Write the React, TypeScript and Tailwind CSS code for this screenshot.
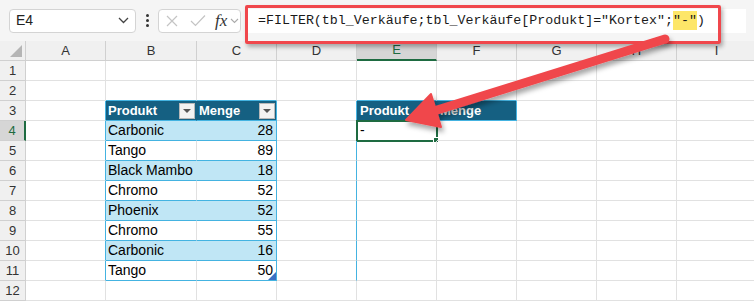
// Excel-like sheet: formula bar with a highlighted FILTER formula, a small
// blue table and a result range, with a red callout arrow on top.

import type { ReactElement } from 'react'

const COLS = ['A', 'B', 'C', 'D', 'E', 'F', 'G', 'H', 'I']
const COL_W = ['w-[80px]', 'w-[91px]', 'w-[80px]', 'w-[80px]', 'w-[80px]', 'w-[80px]', 'w-[80px]', 'w-[80px]', 'w-[80px]']

const DATA: [string, number][] = [
  ['Carbonic', 28],
  ['Tango', 89],
  ['Black Mambo', 18],
  ['Chromo', 52],
  ['Phoenix', 52],
  ['Chromo', 55],
  ['Carbonic', 16],
  ['Tango', 50],
]

const GRID = 'border-[#e1e1e1]'
const TBL_LINE = 'border-[#44b3e1]'

function FilterButton(): ReactElement {
  return (
    <span className="ml-auto mr-px flex h-[16px] w-[16px] items-center justify-center border border-[#b8b8b8] bg-[#f2f2f2]">
      <span className="h-0 w-0 border-x-[4px] border-t-[4px] border-x-transparent border-t-[#555]" />
    </span>
  )
}

function Cell({ row, col }: { row: number; col: number }): ReactElement {
  const w = COL_W[col]
  const base = `relative flex h-[20px] shrink-0 items-center border-b border-r text-[14px] text-black ${w}`
  const letter = COLS[col]

  // table header row
  if (row === 3 && (letter === 'B' || letter === 'C')) {
    return (
      <div className={`${base} bg-[#156082] pl-[2px] font-bold text-white ${letter === 'C' ? TBL_LINE : 'border-r-[#156082]'} border-b-[#44b3e1]`}>
        <span className="text-[13px]">{letter === 'B' ? 'Produkt' : 'Menge'}</span>
        <FilterButton />
      </div>
    )
  }
  if (row === 3 && (letter === 'E' || letter === 'F')) {
    return (
      <div className={`${base} bg-[#156082] pl-[3px] font-bold text-white ${letter === 'F' ? TBL_LINE : 'border-r-[#156082]'} border-b-[#44b3e1]`}>
        <span className="text-[13px]">{letter === 'E' ? 'Produkt' : 'Menge'}</span>
      </div>
    )
  }
  // data rows
  if (row >= 4 && row <= 11 && (letter === 'B' || letter === 'C')) {
    const [name, qty] = DATA[row - 4]
    const banded = row % 2 === 0
    const right = letter === 'C' ? TBL_LINE : banded ? 'border-r-[#c0e6f5]' : GRID
    return (
      <div className={`${base} ${banded ? 'bg-[#c0e6f5]' : 'bg-white'} ${right} border-b-[#44b3e1] ${letter === 'C' ? 'justify-end pr-[3px]' : 'pl-[2px]'}`}>
        {letter === 'B' ? name : qty}
        {letter === 'C' && row === 11 && (
          <span className="absolute bottom-0 right-0 h-0 w-0 border-l-[4px] border-t-[4px] border-l-transparent border-t-transparent border-r-[4px] border-b-[4px] border-r-[#3b6fc4] border-b-[#3b6fc4]" />
        )}
      </div>
    )
  }
  // selected result cell
  if (row === 4 && letter === 'E') {
    return (
      <div className={`${base} ${GRID} pl-[3px]`}>
        -
        <span className="absolute -left-[1px] -top-[1px] h-[22px] w-[82px] border-2 border-[#1e6b41]" />
        <span className="absolute -bottom-[3px] -right-[3px] h-[6px] w-[6px] border border-white bg-[#1e6b41]" />
      </div>
    )
  }
  // borders touching the table outline
  let borders = GRID
  if (row >= 3 && row <= 11 && (letter === 'A' || letter === 'D')) borders = `${GRID} border-r-[#44b3e1]`
  if (row === 3 && letter === 'D') borders = `${GRID} border-r-[#44b3e1]`
  if (row === 2 && ['B', 'C', 'E', 'F'].includes(letter)) borders = `${GRID} border-b-[#44b3e1]`
  return <div className={`${base} ${borders}`} />
}

function Toolbar(): ReactElement {
  return (
    <div className="flex h-[41px] items-center bg-[#f5f5f5] pl-[9px] pr-[8px]">
      <div className="flex h-[24px] w-[127px] items-center justify-between rounded-[4px] border border-[#d4d4d4] bg-white pl-[6px] pr-[6px]">
        <span className="text-[14px] text-[#222]">E4</span>
        <svg width="11" height="7" viewBox="0 0 11 7" fill="none" stroke="#444" strokeWidth="1.3">
          <path d="M1 1l4.5 4.5L10 1" />
        </svg>
      </div>
      <div className="flex w-[22px] flex-col items-center gap-[2px]">
        <span className="h-[3px] w-[3px] rounded-full bg-[#333]" />
        <span className="h-[3px] w-[3px] rounded-full bg-[#333]" />
        <span className="h-[3px] w-[3px] rounded-full bg-[#333]" />
      </div>
      <div className="flex h-[24px] w-[83px] items-center rounded-[4px] border border-[#d4d4d4] bg-white pl-[6px]">
        <svg width="14" height="14" viewBox="0 0 14 14" stroke="#c4c4c4" strokeWidth="1.2">
          <path d="M2 2l10 10M12 2L2 12" />
        </svg>
        <svg className="ml-[11px]" width="16" height="13" viewBox="0 0 16 13" fill="none" stroke="#c4c4c4" strokeWidth="1.2">
          <path d="M1 7l4.5 4.5L15 1.5" />
        </svg>
        <span className="ml-[9px] font-['Liberation_Serif'] text-[17px] italic leading-none text-[#333]">fx</span>
        <svg className="ml-[3px]" width="9" height="6" viewBox="0 0 9 6" fill="none" stroke="#aaa" strokeWidth="1.1">
          <path d="M1 1l3.5 3.5L8 1" />
        </svg>
      </div>
      <div className="ml-[7px] flex h-[24px] flex-1 items-center bg-white pl-[10px]">
        <span className="whitespace-pre font-['Liberation_Mono'] text-[13.3px] text-[#1a1a1a]">
          =FILTER(tbl_Verkäufe;tbl_Verkäufe[Produkt]="Kortex";
          <span className="bg-[#fde668] py-[2px]">"-"</span>)
        </span>
      </div>
    </div>
  )
}

function ColumnHeaders(): ReactElement {
  return (
    <div className="flex h-[20px]">
      <div className="relative h-[20px] w-[26px] shrink-0 border-b border-r border-[#d0d0d0] bg-[#f0f0f0]">
        <span className="absolute bottom-[3px] right-[3px] h-0 w-0 border-b-[12px] border-l-[12px] border-b-[#b5b5b5] border-l-transparent" />
      </div>
      {COLS.map((c, i) => (
        <div
          key={c}
          className={`flex h-[20px] shrink-0 items-center justify-center border-r text-[13px] ${COL_W[i]} ${
            c === 'E'
              ? 'border-b-2 border-b-[#1e6b41] border-r-[#d0d0d0] bg-[#d6d6d6] text-[#1e6b41]'
              : 'border-b border-[#d0d0d0] bg-[#f0f0f0] text-[#333]'
          }`}
        >
          {c}
        </div>
      ))}
    </div>
  )
}

function Arrow(): ReactElement {
  return (
    <svg className="pointer-events-none absolute left-0 top-0" width="754" height="301" viewBox="0 0 754 301">
      <defs>
        <filter id="sh" x="-20%" y="-20%" width="140%" height="160%">
          <feDropShadow dx="2" dy="4" stdDeviation="2.5" floodColor="#000" floodOpacity="0.35" />
        </filter>
      </defs>
      <g filter="url(#sh)" fill="#f0474c" stroke="#f0474c">
        <line x1="665" y1="39" x2="434" y2="111" strokeWidth="9" strokeLinecap="round" />
        <polygon points="406,120 431,94 441,127" strokeWidth="2" strokeLinejoin="round" />
      </g>
    </svg>
  )
}

export default function App(): ReactElement {
  return (
    <div className="relative h-[301px] w-[754px] overflow-hidden bg-white font-['Liberation_Sans',sans-serif]">
      <Toolbar />
      <ColumnHeaders />
      {Array.from({ length: 12 }, (_, r) => r + 1).map((row) => (
        <div key={row} className="flex">
          <div
            className={`flex h-[20px] w-[26px] shrink-0 items-center justify-center border-b text-[13px] ${
              row === 4
                ? 'border-r-2 border-b-[#d0d0d0] border-r-[#1e6b41] bg-[#d6d6d6] text-[#1e6b41]'
                : 'border-r border-[#d0d0d0] bg-[#f0f0f0] text-[#333]'
            }`}
          >
            {row}
          </div>
          {COLS.map((_, i) => (
            <Cell key={i} row={row} col={i} />
          ))}
        </div>
      ))}
      <div className="pointer-events-none absolute left-[245px] top-[5px] h-[39px] w-[476px] rounded-[2px] border-[3px] border-[#f0474c] shadow-[2px_3px_4px_rgba(0,0,0,0.3)]" />
      <Arrow />
    </div>
  )
}
